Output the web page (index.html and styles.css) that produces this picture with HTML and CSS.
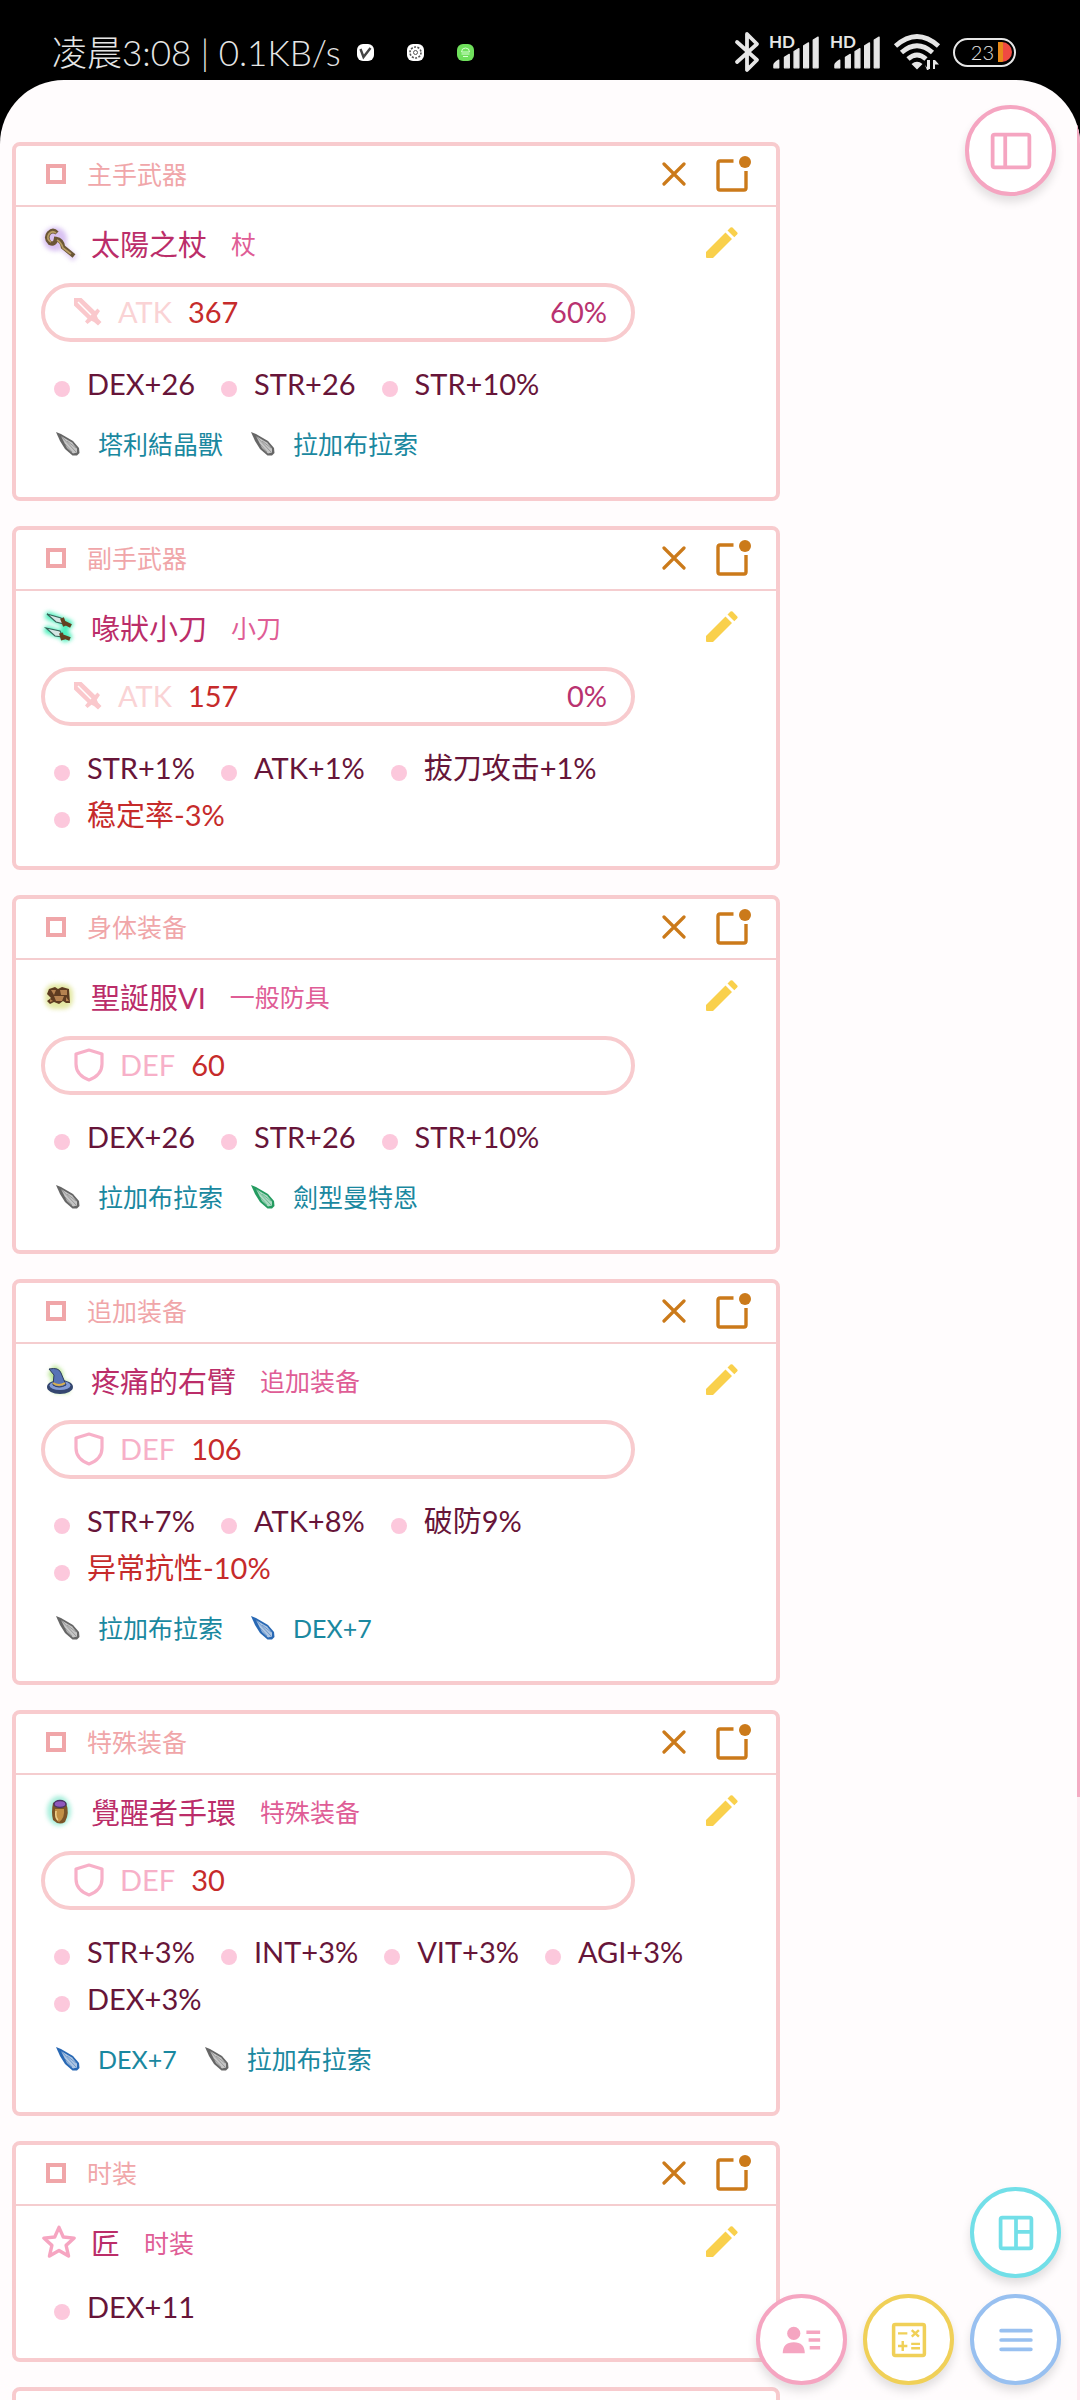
FILE: index.html
```
<!DOCTYPE html>
<html lang="zh-CN">
<head>
  <meta charset="UTF-8">
  <meta name="viewport" content="width=device-width, initial-scale=1.0">
  <title>装备</title>
  <link rel="stylesheet" href="styles.css">
</head>
<body>
  <!-- shared icons -->
  <svg class="sprite" aria-hidden="true">
    <symbol id="i-square" viewBox="0 0 20 20"><rect x="2" y="2" width="16" height="16" fill="none" stroke="currentColor" stroke-width="4"/></symbol>
    <symbol id="i-close" viewBox="0 0 24 24"><path d="M2 2 22 22M22 2 2 22" fill="none" stroke="currentColor" stroke-width="3.2" stroke-linecap="round"/></symbol>
    <symbol id="i-window" viewBox="0 0 36 36"><path d="M19 6H5.500Q3.500 6 3.500 8V33Q3.500 35 5.500 35H29.500Q31.500 35 31.500 33V16" fill="none" stroke="currentColor" stroke-width="3.400" transform="translate(-1.500 -1)"/><circle cx="29" cy="6" r="6" fill="currentColor"/></symbol>
    <symbol id="i-edit" viewBox="0 0 32 32"><path d="M0 25 19.500 5.500 26 12 7 31H1Q0 31 0 30ZM21.500 3.500 24.500.600Q25.500-.300 26.500.600L31.300 5.400Q32 6.300 31.300 7.200L28.300 10.200Z" fill="currentColor"/></symbol>
    <symbol id="i-sword" viewBox="0 0 28 28"><path d="M0 0H7.500L21 13 23.500 10.500 26 13 22.800 17.800 24 20.400 27.500 24 24 27.500 20 24 17.500 22.800 13.500 26 11 23.500 13.500 20.500 0 7.500Z" fill="currentColor"/><path d="M4 4 17 17" stroke="#fff" stroke-width="1.400"/></symbol>
    <symbol id="i-shield" viewBox="0 0 30 34"><path d="M15 2 28 6V16Q28 27 15 32Q2 27 2 16V6Z" fill="none" stroke="currentColor" stroke-width="3.200" stroke-linejoin="round"/></symbol>
    <symbol id="i-star" viewBox="0 0 32 32"><path d="M16 3 19.800 11.600 29.500 12.500 22.300 19 24.500 28.500 16 23.500 7.500 28.500 9.700 19 2.500 12.500 12.200 11.600Z" fill="none" stroke="currentColor" stroke-width="3" stroke-linejoin="round"/></symbol>
    <symbol id="i-crystal" viewBox="0 0 24 24"><path d="M0 0 5 2 17 9 23 16 23.500 21 21 23.500H16.500L9 17 4 9Z" fill="currentColor"/><path d="M5 4 16 10.500 21 16.500 21 20.500 17 21.500 11 16Z" fill="#fff" opacity=".62"/><path d="M5 4 20 20M11 9 20 16M9 12 16 20" stroke="currentColor" stroke-width=".8" opacity=".6" fill="none"/></symbol>
    <symbol id="i-signal" viewBox="0 0 50 34"><path d="M2 33V30Q2 28 7 25V33ZM13 33V22L18 19V33ZM23 33V16L28 13V33ZM33 33V10L38 7V33ZM43 33V4L48 1V33Z" fill="currentColor" stroke="currentColor" stroke-width="1.400" stroke-linejoin="round"/></symbol>
  </svg>

  <header class="status">
    <div class="status-left">
      <span class="clock">凌晨3:08 | 0.1KB/s</span>
      <svg class="app" viewBox="0 0 17 17"><rect width="17" height="17" rx="6" fill="#fff"/><path d="M3.500 5 6.500 13 13.500 4" fill="none" stroke="#444" stroke-width="2.400"/></svg>
      <svg class="app" viewBox="0 0 17 17"><rect width="17" height="17" rx="6" fill="#fff"/><circle cx="8.500" cy="8.500" r="5.500" fill="none" stroke="#555" stroke-width="1.600" stroke-dasharray="2 1.400"/><circle cx="8.500" cy="8.500" r="2" fill="none" stroke="#555"/></svg>
      <svg class="app" viewBox="0 0 17 17"><rect width="17" height="17" rx="6" fill="#6fe05c"/><path d="M4.500 8A4 4 0 0 1 12.500 8ZM4.500 10H12.500M6 12.500H11" fill="none" stroke="#d7ffd0"/></svg>
    </div>
    <div class="status-right">
      <svg class="bt" viewBox="0 0 24 40"><path d="M2 10 22 28 12 38V2L22 12 2 30" fill="none" stroke="currentColor" stroke-width="3.800" stroke-linejoin="round" stroke-linecap="round"/></svg>
      <span class="sim"><b>HD</b><svg><use href="#i-signal"/></svg></span>
      <span class="sim"><b>HD</b><svg><use href="#i-signal"/></svg></span>
      <svg class="wifi" viewBox="0 0 46 36"><g fill="none" stroke="currentColor" stroke-width="4.800"><path d="M1.500 12Q23-7 44.500 12M7.500 18.500Q23 5 38.500 18.500M14 25Q23 17 32 25"/></g><path d="M17.500 30Q23 25.500 28.500 30L23 35.500ZM33 35V26H36V35ZM31 31 35 36H33ZM39 26H41V35H39ZM41 26 45 30.500H41Z" fill="currentColor"/></svg>
      <span class="battery">23<i></i></span>
    </div>
  </header>

  <main class="page">
    <button class="fab fab-top pink" aria-label="侧栏">
      <svg viewBox="0 0 40 40"><path d="M4.500 4.500H35.500Q37.500 4.500 37.500 6.500V33.500Q37.500 35.500 35.500 35.500H4.500Q2.500 35.500 2.500 33.500V6.500Q2.500 4.500 4.500 4.500ZM14.500 4.500V35.500" fill="none" stroke="currentColor" stroke-width="3.600"/></svg>
    </button>

    <div class="equips">
      <section class="card">
        <div class="card-head">
          <svg class="mark"><use href="#i-square"/></svg>
          <h2>主手武器</h2>
          <button class="act close" aria-label="移除"><svg><use href="#i-close"/></svg></button>
          <button class="act window" aria-label="展开"><svg><use href="#i-window"/></svg></button>
        </div>
        <div class="card-body">
          <div class="title">
            <svg class="item" viewBox="0 0 36 36"><ellipse class="glow" cx="14" cy="14" rx="12" ry="12" fill="#d9c2f2"/><path class="glow" d="M20 20 34 34" stroke="#e2d2f3" stroke-width="7"/><path d="M16 8Q12 4 8 8Q4 13 9 18Q14 20 15 14Q21 15 22 22L33 31" fill="none" stroke="#6b5636" stroke-width="4.500"/><path d="M15 8Q11 5 8 9Q5 14 10 17M16 15Q20 17 22 23L30 29" fill="none" stroke="#b89d64" stroke-width="1.800"/></svg>
            <span class="name">太陽之杖</span><span class="kind">杖</span>
            <button class="act edit" aria-label="编辑"><svg><use href="#i-edit"/></svg></button>
          </div>
          <div class="base atk"><svg><use href="#i-sword"/></svg><span>ATK</span><b>367</b><em>60%</em></div>
          <ul class="stats"><li>DEX+26</li><li>STR+26</li><li>STR+10%</li></ul>
          <ul class="crystals">
            <li><svg class="gray"><use href="#i-crystal"/></svg>塔利結晶獸</li>
            <li><svg class="gray"><use href="#i-crystal"/></svg>拉加布拉索</li>
          </ul>
        </div>
      </section>

      <section class="card">
        <div class="card-head">
          <svg class="mark"><use href="#i-square"/></svg>
          <h2>副手武器</h2>
          <button class="act close" aria-label="移除"><svg><use href="#i-close"/></svg></button>
          <button class="act window" aria-label="展开"><svg><use href="#i-window"/></svg></button>
        </div>
        <div class="card-body">
          <div class="title">
            <svg class="item" viewBox="0 0 36 36"><path class="glow" d="M8 7 28 15M7 21 27 28M24 14V29" stroke="#4df0bc" stroke-width="8" stroke-linecap="round"/><path d="M6 5 20 9 23 15 15 13ZM5 19 19 22 22 28 14 27Z" fill="#d5e6e4" stroke="#366359" stroke-width="1.200"/><path d="M21 9 24 17M22 13 30 17M20 24 22 31M21 27 29 30" stroke="#63401f" stroke-width="4"/></svg>
            <span class="name">喙狀小刀</span><span class="kind">小刀</span>
            <button class="act edit" aria-label="编辑"><svg><use href="#i-edit"/></svg></button>
          </div>
          <div class="base atk"><svg><use href="#i-sword"/></svg><span>ATK</span><b>157</b><em>0%</em></div>
          <ul class="stats"><li>STR+1%</li><li>ATK+1%</li><li>拔刀攻击+1%</li><li class="minus">稳定率-3%</li></ul>
        </div>
      </section>

      <section class="card">
        <div class="card-head">
          <svg class="mark"><use href="#i-square"/></svg>
          <h2>身体装备</h2>
          <button class="act close" aria-label="移除"><svg><use href="#i-close"/></svg></button>
          <button class="act window" aria-label="展开"><svg><use href="#i-window"/></svg></button>
        </div>
        <div class="card-body">
          <div class="title">
            <svg class="item" viewBox="0 0 36 36"><rect class="glow" x="4" y="6" width="28" height="25" rx="9" fill="#e4e8a4"/><path d="M8 11 14 9 17 11 21 9 28 11 29 25 25 25 22 23 18 26 13 24 9 26 6 23 10 20 6 16Z" fill="#5e3b20"/><path d="M10 12 15 12 13 17ZM19 12H26V17H20ZM13 18H23L21 23H15ZM9 21 12 23 9 24ZM25 19 28 23H25Z" fill="#b58250"/></svg>
            <span class="name">聖誕服VI</span><span class="kind">一般防具</span>
            <button class="act edit" aria-label="编辑"><svg><use href="#i-edit"/></svg></button>
          </div>
          <div class="base def"><svg><use href="#i-shield"/></svg><span>DEF</span><b>60</b></div>
          <ul class="stats"><li>DEX+26</li><li>STR+26</li><li>STR+10%</li></ul>
          <ul class="crystals">
            <li><svg class="gray"><use href="#i-crystal"/></svg>拉加布拉索</li>
            <li><svg class="green"><use href="#i-crystal"/></svg>劍型曼特恩</li>
          </ul>
        </div>
      </section>

      <section class="card">
        <div class="card-head">
          <svg class="mark"><use href="#i-square"/></svg>
          <h2>追加装备</h2>
          <button class="act close" aria-label="移除"><svg><use href="#i-close"/></svg></button>
          <button class="act window" aria-label="展开"><svg><use href="#i-window"/></svg></button>
        </div>
        <div class="card-body">
          <div class="title">
            <svg class="item" viewBox="0 0 36 36"><path class="glow" d="M10 8 16 12 16 25 28 25" fill="none" stroke="#b5e48c" stroke-width="12" stroke-linejoin="round"/><ellipse cx="19" cy="25" rx="13" ry="7" fill="#34466f"/><ellipse cx="19" cy="23.500" rx="10.500" ry="4.500" fill="#829bd6"/><path d="M12 23 13 13 8 7Q18 5 20 11L25 23Q18 27 12 23Z" fill="#5773b6" stroke="#2d3b5e"/><path d="M12 21Q18 25 24 21" fill="none" stroke="#d9b04e" stroke-width="2"/></svg>
            <span class="name">疼痛的右臂</span><span class="kind">追加装备</span>
            <button class="act edit" aria-label="编辑"><svg><use href="#i-edit"/></svg></button>
          </div>
          <div class="base def"><svg><use href="#i-shield"/></svg><span>DEF</span><b>106</b></div>
          <ul class="stats"><li>STR+7%</li><li>ATK+8%</li><li>破防9%</li><li class="minus">异常抗性-10%</li></ul>
          <ul class="crystals">
            <li><svg class="gray"><use href="#i-crystal"/></svg>拉加布拉索</li>
            <li><svg class="blue"><use href="#i-crystal"/></svg>DEX+7</li>
          </ul>
        </div>
      </section>

      <section class="card">
        <div class="card-head">
          <svg class="mark"><use href="#i-square"/></svg>
          <h2>特殊装备</h2>
          <button class="act close" aria-label="移除"><svg><use href="#i-close"/></svg></button>
          <button class="act window" aria-label="展开"><svg><use href="#i-window"/></svg></button>
        </div>
        <div class="card-body">
          <div class="title">
            <svg class="item" viewBox="0 0 36 36"><ellipse class="glow" cx="18" cy="18" rx="12" ry="15" fill="#a9efdc"/><path d="M12 10Q18 5 25 10Q29 20 24 29Q18 33 12 27Q10 19 12 10Z" fill="#7b5528"/><path d="M14 16Q14 28 18 29Q24 25 23 16Z" fill="#c29045"/><path d="M15 18Q14 25 17 27" fill="none" stroke="#efd08a" stroke-width="1.600"/><ellipse cx="19" cy="11" rx="6" ry="3.500" fill="#8f58bd" stroke="#4b3565" stroke-width="1.500"/></svg>
            <span class="name">覺醒者手環</span><span class="kind">特殊装备</span>
            <button class="act edit" aria-label="编辑"><svg><use href="#i-edit"/></svg></button>
          </div>
          <div class="base def"><svg><use href="#i-shield"/></svg><span>DEF</span><b>30</b></div>
          <ul class="stats"><li>STR+3%</li><li>INT+3%</li><li>VIT+3%</li><li>AGI+3%</li><li>DEX+3%</li></ul>
          <ul class="crystals">
            <li><svg class="blue"><use href="#i-crystal"/></svg>DEX+7</li>
            <li><svg class="gray"><use href="#i-crystal"/></svg>拉加布拉索</li>
          </ul>
        </div>
      </section>

      <section class="card">
        <div class="card-head">
          <svg class="mark"><use href="#i-square"/></svg>
          <h2>时装</h2>
          <button class="act close" aria-label="移除"><svg><use href="#i-close"/></svg></button>
          <button class="act window" aria-label="展开"><svg><use href="#i-window"/></svg></button>
        </div>
        <div class="card-body">
          <div class="title">
            <svg class="item star"><use href="#i-star"/></svg>
            <span class="name">匠</span><span class="kind">时装</span>
            <button class="act edit" aria-label="编辑"><svg><use href="#i-edit"/></svg></button>
          </div>
          <ul class="stats"><li>DEX+11</li></ul>
        </div>
      </section>

      <section class="card">
        <div class="card-head">
          <svg class="mark"><use href="#i-square"/></svg>
          <h2></h2>
          <button class="act close" aria-label="移除"><svg><use href="#i-close"/></svg></button>
          <button class="act window" aria-label="展开"><svg><use href="#i-window"/></svg></button>
        </div>
      </section>
    </div>
    <div class="scrollbar"><i></i></div>
  </main>

  <nav class="fabs">
    <button class="fab cyan" aria-label="布局">
      <svg viewBox="0 0 40 40"><path d="M7.500 6H32.500Q34 6 34 7.500V32.500Q34 34 32.500 34H7.500Q6 34 6 32.500V7.500Q6 6 7.500 6ZM20 6V34M20 19H34" fill="none" stroke="currentColor" stroke-width="3.400"/></svg>
    </button>
    <button class="fab pink" aria-label="角色">
      <svg viewBox="0 0 40 40"><circle cx="12.500" cy="14" r="6" fill="currentColor"/><path d="M2.500 32Q2.500 22 12.500 22Q22.500 22 22.500 32Z" fill="currentColor"/><path d="M24 13H36.500M26 20H36.500M27 27H36.500" stroke="currentColor" stroke-width="3.200"/></svg>
    </button>
    <button class="fab yellow" aria-label="计算">
      <svg viewBox="0 0 40 40"><rect x="6" y="6" width="28" height="28" rx="1.500" fill="none" stroke="currentColor" stroke-width="3.200"/><path d="M10 14H18.500M22.500 11 29 17M29 11 22.500 17M14.300 21V30M10 25.500H18.500M22 23.500H30M22 27.500H30" stroke="currentColor" stroke-width="2.200"/></svg>
    </button>
    <button class="fab blue-line" aria-label="菜单">
      <svg viewBox="0 0 40 40"><path d="M6.500 11.500H33.500M6.500 20H33.500M6.500 28.500H33.500" stroke="currentColor" stroke-width="3.400" stroke-linecap="round"/></svg>
    </button>
  </nav>
</body>
</html>
```
FILE: styles.css
```
* {
  box-sizing: border-box;
}
body {
  margin: 0;
  height: 100vh;
  display: flex;
  flex-direction: column;
  overflow: hidden;
  background: #000;
  font-family: Lato, "Noto Sans CJK SC", sans-serif;
  font-size: 29px;
}
svg {
  display: block;
  flex: none;
  overflow: visible;
}
ul {
  list-style: none;
  margin: 0;
  padding: 0;
}
button {
  padding: 0;
  border: 0;
  background: none;
  cursor: pointer;
}
.sprite {
  position: absolute;
  width: 0;
  height: 0;
}

/* status bar */
.status {
  flex: none;
  height: 80px;
  padding: 24px 64px 0 52px;
  display: flex;
  justify-content: space-between;
  align-items: center;
  color: #e6e6e6;
}
.status-left,
.status-right {
  display: flex;
  align-items: center;
}
.clock {
  font-size: 35px;
  font-weight: 300;
  line-height: 56px;
  margin-right: 16px;
}
.app {
  width: 17px;
  height: 17px;
  margin-right: 33px;
}
.status-right {
  gap: 13px;
}
.bt {
  width: 24px;
  height: 40px;
}
.sim {
  position: relative;
  width: 48px;
}
.sim svg {
  width: 48px;
  height: 33px;
}
.sim b {
  position: absolute;
  left: -3px;
  top: -3px;
  font-size: 17px;
  line-height: 17px;
}
.wifi {
  width: 46px;
  height: 36px;
}
.battery {
  display: flex;
  align-items: center;
  justify-content: flex-end;
  gap: 4px;
  width: 63px;
  height: 29px;
  padding-right: 2px;
  border: 2px solid #e6e6e6;
  border-radius: 15px;
  font-size: 20px;
  font-weight: 300;
}
.battery i {
  width: 14px;
  height: 20px;
  border-radius: 0 10px 10px 0;
  background: linear-gradient(90deg, #e88a1a 5px, #f04a42 5px);
}

/* page */
.page {
  position: relative;
  flex: 1;
  min-height: 0;
  overflow: hidden;
  padding: 62px 12px 0;
  border-radius: 64px 64px 0 0;
  background: #fffcfd;
}
.equips {
  display: flex;
  flex-direction: column;
  gap: 25px;
  max-width: 768px;
}
.scrollbar {
  position: absolute;
  top: 0;
  right: 0;
  bottom: 0;
  width: 3px;
  background: #fdeaf0;
}
.scrollbar i {
  display: block;
  height: 74%;
  background: #f5abc3;
}

/* equipment card */
.card {
  border: 4px solid #f8cbce;
  border-radius: 8px;
  background: #fff;
}
.card-head {
  display: flex;
  align-items: center;
  height: 61px;
  padding: 0 24px 3px 30px;
  border-bottom: 2px solid #f5cdcf;
}
.mark {
  width: 20px;
  height: 20px;
  color: #f0a6a9;
}
.card-head h2 {
  flex: 1;
  margin: 0 0 0 21px;
  font-size: 25px;
  font-weight: 400;
  line-height: 40px;
  color: #f0a6a9;
}
.act {
  color: #cb7a1a;
}
.close svg {
  width: 24px;
  height: 24px;
}
.window {
  margin-left: 30px;
}
.window svg {
  width: 36px;
  height: 36px;
}
.card-body {
  padding: 0 38px 28px 25px;
}
.title {
  display: flex;
  align-items: center;
  height: 72px;
}
.item {
  width: 36px;
  height: 36px;
  margin-right: 14px;
}
.glow {
  filter: blur(2px);
}
.star {
  color: #f6a5c1;
}
.name {
  color: #bb2d69;
}
.kind {
  margin-left: 24px;
  font-size: 25px;
  color: #df5d96;
}
.edit {
  margin-left: auto;
  color: #f9d04c;
}
.edit svg {
  width: 32px;
  height: 32px;
}
.base {
  display: flex;
  align-items: center;
  width: 594px;
  max-width: 100%;
  height: 59px;
  margin: 4px 0 0;
  padding: 0 24px 2px 29px;
  border: 4px solid #f8cbce;
  border-radius: 30px;
}
.base svg {
  width: 30px;
  height: 34px;
  margin-right: 16px;
}
.base b {
  margin-left: 16px;
  font-weight: 400;
  color: #c62b2b;
}
.base em {
  margin-left: auto;
  font-style: normal;
  color: #b93270;
}
.base + .stats {
  padding-top: 18px;
}
.atk {
  color: #fad3d5;
}
.atk svg {
  width: 28px;
  height: 28px;
  margin-right: 16px;
  color: #fac8cc;
}
.def {
  color: #f7b0c8;
}
.stats {
  display: flex;
  flex-wrap: wrap;
  column-gap: 26px;
  padding: 5px 0 0 13px;
  line-height: 47px;
  color: #671539;
}
.stats li {
  display: flex;
  align-items: center;
}
.stats li::before {
  content: "";
  width: 16px;
  height: 16px;
  margin: 10px 17px 0 0;
  border-radius: 50%;
  background: #fcc8dc;
}
.stats .minus {
  color: #c62b2b;
}
.crystals {
  display: flex;
  gap: 28px;
  padding: 12px 0 0 15px;
  font-size: 25px;
  line-height: 50px;
  color: #1a88a0;
}
.crystals li {
  display: flex;
  align-items: center;
}
.crystals svg {
  width: 24px;
  height: 24px;
  margin-right: 18px;
}
.gray {
  color: #666;
}
.green {
  color: #249b60;
}
.blue {
  color: #2868b4;
}

/* round buttons */
.fab {
  display: grid;
  place-items: center;
  width: 91px;
  height: 91px;
  border: 4px solid currentColor;
  border-radius: 50%;
  background: #fff;
  box-shadow: 0 6px 10px rgba(0, 0, 0, 0.12);
}
.fab svg {
  width: 44px;
  height: 44px;
}
.fab-top {
  position: absolute;
  top: 25px;
  right: 24px;
}
.fab-top svg {
  width: 42px;
  height: 42px;
}
.fabs {
  position: fixed;
  right: 19px;
  bottom: 15px;
  display: grid;
  grid-template-columns: repeat(3, auto);
  gap: 16px;
}
.cyan {
  grid-column: 3;
  color: #72dfe8;
}
.pink {
  color: #f5a5c1;
}
.yellow {
  color: #f0d058;
}
.blue-line {
  color: #98c0f0;
}
```
